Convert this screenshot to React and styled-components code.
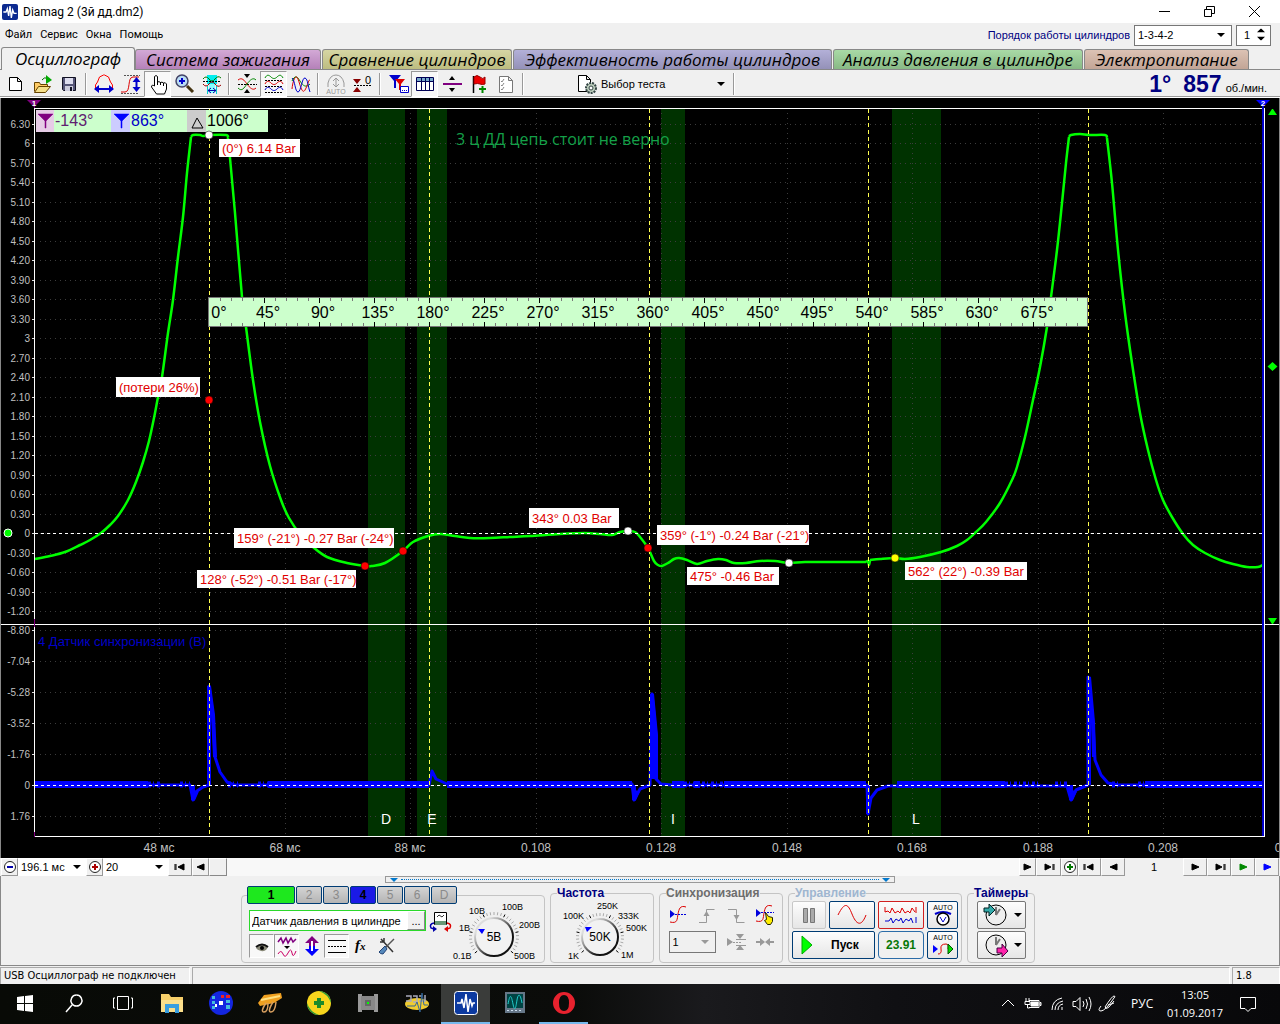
import React, { useState } from 'react';
import styled, { createGlobalStyle, css } from 'styled-components';

const toolGroups = [
  ['new', 'open', 'save'],
  ['period', 'front', 'hand', 'zoom', 'fit'],
  ['center', 'split3', 'overlay'],
  ['auto', 'zero'],
  ['cursors', 'table', 'divide', 'flag', 'checks'],
];
const pressedTools = ['hand', 'split3', 'table'];

const tabs = [
  { name: 'Осциллограф', width: 134, active: true },
  { name: 'Система зажигания', width: 186, from: '#d3a9d6', to: '#b581b9' },
  { name: 'Сравнение цилиндров', width: 190, from: '#d6d6a4', to: '#bdbd80' },
  { name: 'Эффективность работы цилиндров', width: 319, from: '#b3b0d8', to: '#9491b8' },
  { name: 'Анализ давления в цилиндре', width: 250, from: '#a9daa6', to: '#88b985' },
  { name: 'Электропитание', width: 165, from: '#dcc2b4', to: '#c2a596' },
];

/* ---------- chart data ---------- */

const pressure = [
  [[35, 559], [50, 556], [65, 552], [80, 545], [90, 540], [101, 533], [110, 525], [118, 516], [128, 500], [136, 482], [143, 462], [149, 441], [154, 418], [158, 397], [162, 377], [168, 333], [173, 300], [178, 257], [183, 217], [187, 173], [191, 137]],
  [[191, 137], [193, 135], [200, 135], [203, 136], [209, 135], [226, 135], [228, 138]],
  [[228, 138], [230, 158], [235, 213], [242, 297], [246, 327], [253, 380], [260, 422], [270, 466], [281, 500], [289, 518], [300, 534], [313, 547], [327, 557], [347, 563], [365, 566], [372, 566], [385, 563], [403, 551], [413, 542], [428, 536], [440, 534], [455, 536], [470, 538], [490, 538], [510, 537], [530, 536], [560, 534], [585, 533], [600, 534], [612, 535], [620, 532], [628, 531], [635, 532], [640, 537], [648, 548], [654, 561], [658, 565], [662, 566], [668, 563], [674, 559], [679, 558], [687, 560], [697, 564], [707, 561], [718, 559], [726, 560], [734, 563], [746, 563], [760, 561], [775, 561], [789, 563], [805, 562], [830, 562], [866, 562]],
  [[866, 562], [868, 561], [869, 565], [870, 560]],
  [[870, 560], [880, 559], [895, 558], [905, 559], [920, 557], [941, 552], [957, 546], [967, 540], [976, 532], [986, 522], [1000, 503], [1012, 480], [1017, 467], [1025, 437], [1033, 400], [1040, 367], [1047, 327], [1051, 297], [1057, 250], [1062, 203], [1066, 163], [1069, 137]],
  [[1069, 137], [1071, 135], [1080, 134], [1090, 135], [1105, 135], [1107, 138]],
  [[1107, 138], [1112, 183], [1118, 250], [1125, 313], [1132, 363], [1140, 413], [1148, 450], [1156, 480], [1163, 500], [1172, 517], [1183, 534], [1193, 545], [1205, 553], [1220, 560], [1233, 564], [1247, 567], [1258, 567], [1263, 565]],
];

const syncLine = 'M35 785H190L193 800L197 791L203 787L209 785V686L213 716L215 757L220 772L227 782L234 785H429L432 771L436 779L447 784H632L634 800L640 789L650 785L652 694L656 735V779L661 784L672 785H867L868 814L871 798L877 790L888 786H1067L1071 800L1076 790L1088 785V677L1093 722L1095 760L1101 775L1108 783L1118 785H1263';
const syncSpikes = 'M209 785V686L213 715L215 757M652 779V694L656 735V779M868 785V814M1089 785V677L1093 722L1094 757M193 785V800L197 791M634 785V800L638 791M1071 785V800L1075 791';
const syncBands = [[35, 148], [268, 429], [447, 632], [672, 684], [694, 700], [724, 866], [897, 1005], [1145, 1264]];
const syncNoise = [[148, 162], [180, 190], [228, 238], [258, 268], [684, 724], [1005, 1040], [1055, 1068], [1112, 1118], [1138, 1145]];

const bands = [[368, 37, 'D', 386], [417, 30, 'E', 432], [661, 24, 'I', 673], [892, 49, 'L', 916]];
const strokes = [209, 429, 649, 868, 1088];
const upperTicks = Array.from({ length: 26 }, (_, i) => {
  const v = 6.3 - i * 0.3;
  const text = Math.abs(v) < 0.01 ? '0' : Math.abs(v - Math.round(v)) < 0.01 && v > 0 ? String(Math.round(v)) : v.toFixed(2);
  return [text, Math.round(124 + i * 19.48)];
});
const lowerTicks = ['-8.80', '-7.04', '-5.28', '-3.52', '-1.76', '0', '1.76'].map((t, i) => [t, 630 + i * 31]);
const timeTicks = [['48 мс', 159], ['68 мс', 285], ['88 мс', 410], ['0.108', 536], ['0.128', 661], ['0.148', 787], ['0.168', 912], ['0.188', 1038], ['0.208', 1163]];

const notes = [
  ['(0°) 6.14 Bar', 219, 139, 81, 18],
  ['(потери 26%)', 116, 377, 84, 20],
  ['159° (-21°) -0.27 Bar (-24°)', 234, 528, 160, 20],
  ['128° (-52°) -0.51 Bar (-17°)', 197, 570, 159, 18],
  ['343° 0.03 Bar', 529, 508, 90, 20],
  ['359° (-1°) -0.24 Bar (-21°)', 657, 525, 152, 20],
  ['475° -0.46 Bar', 687, 567, 92, 18],
  ['562° (22°) -0.39 Bar', 905, 562, 122, 18],
];
const points = [[209, 135, '#fff'], [209, 400, '#f00'], [365, 566, '#f00'], [403, 551, '#f00'], [628, 531, '#fff'], [648, 548, '#f00'], [789, 563, '#fff'], [895, 558, '#ff0']];

const smooth = (pts) => pts.reduce((d, p, i) => {
  if (i === 0) return `M${p[0]} ${p[1]}`;
  const a = pts[Math.max(i - 2, 0)];
  const b = pts[i - 1];
  const c = pts[Math.min(i + 1, pts.length - 1)];
  return `${d}C${b[0] + (p[0] - a[0]) / 6} ${b[1] + (p[1] - a[1]) / 6} ${p[0] - (c[0] - b[0]) / 6} ${p[1] - (c[1] - b[1]) / 6} ${p[0]} ${p[1]}`;
}, '');

const Chart = () => (
  <ChartSvg viewBox="1 98 1278 760" role="img" aria-label="Осциллограмма давления">
    {bands.map(([x, w]) => <rect key={x} x={x} y="109" width={w} height="727" fill="#003200" />)}
    <g stroke="#3c3c3c" strokeDasharray="1 4" shapeRendering="crispEdges">
      {[...upperTicks, ...lowerTicks].map(([t, y]) => <path key={y} d={`M40 ${y}.5H1262`} />)}
      {timeTicks.map(([t, x]) => <path key={x} d={`M${x}.5 113V835`} />)}
    </g>

    <g fill="#c0c0c0" fontSize="10" textAnchor="end">
      {[...upperTicks, ...lowerTicks].map(([t, y]) => (
        <g key={y}><text x="30" y={y + 4}>{t}</text><path d={`M32 ${y}.5h3`} stroke="#ddd" /></g>
      ))}
    </g>
    <g fill="#c0c0c0" fontSize="12" textAnchor="middle">
      {timeTicks.map(([t, x]) => <text key={x} x={x} y="852">{t}</text>)}
      <text x="1278" y="852">0</text>
    </g>

    <g fill="none" stroke="#0f0" strokeWidth="2.5" strokeLinejoin="round">
      {pressure.map((seg, i) => <path key={i} d={smooth(seg)} />)}
    </g>
    <g fill="none" stroke="#00f">
      <path d={syncLine} strokeWidth="3" strokeLinejoin="round" />
      <path d={syncSpikes} strokeWidth="4" />
      {syncBands.map(([a, b]) => <path key={a} d={`M${a} 784.5H${b}`} strokeWidth="7" />)}
      {syncNoise.map(([a, b]) => <path key={a} d={`M${a} 784.5H${b}`} strokeWidth="6" strokeDasharray="3 2 1 3" />)}
    </g>

    <g shapeRendering="crispEdges" fill="none">
      <path d="M35 533.5H1263M35 785.5H1263" stroke="#fff" strokeDasharray="3 3" />
      {strokes.map((x) => <path key={x} d={`M${x}.5 109V836`} stroke="#ffff50" strokeDasharray="4 3" />)}
      <path d="M34.5 108V836.5H1264.5V108.5H34.5M1 624.5H1279" stroke="#fff" />
      <path d="M34.5 100V108M34.5 619V627M34.5 832V837" stroke="#800080" />
      <path d="M1262.5 105V836" stroke="#00c" strokeWidth="2" />
    </g>
    <path d="M27 100H41L34 107Z" fill="#800080" />
    <path d="M1256 100H1270L1263 107Z" fill="#00f" />
    <g fill="#fff" fontSize="8" fontWeight="bold" textAnchor="middle"><text x="34" y="106">1</text><text x="1263" y="106">2</text></g>
    <path d="M1268 115h9l-4-6h-1zM1272.500 362l5 4.500-5 4.500-5-4.500zM1268 618h9l-4 6h-1z" fill="#0f0" />
    <circle cx="8" cy="533" r="4" fill="#0f0" stroke="#fff" />

    <g fill="#fff" fontSize="14" textAnchor="middle">
      {bands.map(([x, w, t, tx]) => <text key={t} x={tx} y="824">{t}</text>)}
    </g>
    <text x="38" y="646" fontSize="13" fill="#0000c8">4 Датчик синхронизации (В)</text>
    <Remark x="456" y="145">3 ц ДД цепь стоит не верно</Remark>

    <g>
      <rect x="36" y="110" width="232" height="22" fill="#cfc" />
      <rect x="36" y="110" width="18" height="22" fill="#e6cce6" />
      <rect x="111" y="110" width="19" height="22" fill="#ccf" />
      <rect x="187" y="110" width="19" height="22" fill="#ccc" />
      <path d="M38 114H53L46 121V128H45V121Z" fill="#800080" stroke="#800080" strokeWidth="0.5" />
      <path d="M114 114H129L122 121V128H121V121Z" fill="#00f" stroke="#00f" strokeWidth="0.5" />
      <path d="M192 128L197 118L203 128Z" fill="none" stroke="#000" />
      <g fontSize="16"><text x="55" y="126" fill="#602070">-143°</text><text x="131" y="126" fill="#0000c8">863°</text><text x="207" y="126">1006°</text></g>
    </g>

    <g shapeRendering="crispEdges">
      <rect x="208.5" y="297.5" width="879" height="29" fill="#cfc" stroke="#777" />
      {Array.from({ length: 79 }, (_, i) => (
        <path key={i} d={`M${Math.round(220 + i * 10.99)}.5 298v${i % 5 === 4 ? 5 : 3}m0 ${i % 5 === 4 ? 19 : 22}v${i % 5 === 4 ? 5 : 3}`} stroke={i % 5 === 4 ? '#000' : '#777'} />
      ))}
    </g>
    <g fontSize="16" textAnchor="middle">
      {Array.from({ length: 16 }, (_, i) => <text key={i} x={i ? Math.round(213 + i * 54.95) : 219} y="318">{i * 45}°</text>)}
    </g>

    {points.map(([x, y, c]) => <circle key={`${x}-${y}`} cx={x} cy={y} r="4" fill={c} stroke="#000" strokeWidth="0.5" />)}
    {notes.map(([t, x, y, w, h]) => (
      <g key={t}>
        <rect x={x} y={y} width={w} height={h} fill="#fff" />
        <text x={x + 3} y={y + h / 2 + 5} fontSize="13" fill="#e00000">{t}</text>
      </g>
    ))}
  </ChartSvg>
);

/* ---------- icons ---------- */

const icons = {
  new: <path d="M6.500 5.500h8l4 4v9h-12zM14.500 5.500v4h4" fill="#fff" stroke="#000" />,
  open: <g><path d="M4.500 19.500v-9h5l1 2h7v3" fill="#fc6" stroke="#640" /><path d="M4.500 20.500l4-6h12l-5 6z" fill="#f5e08a" stroke="#640" /><path d="M12 8q2-3 5-2" fill="none" stroke="#060" /><path d="M16 3l6 5-6 4z" fill="#0a0" /></g>,
  save: <g><path d="M5.500 5.500h13v13h-12l-1-1z" fill="#557" stroke="#112" /><path d="M8 6h8v6H8z" fill="#dde" /><path d="M8 14h8v5H8z" fill="#ccd" /><path d="M13 15h2v4h-2z" fill="#112" /></g>,
  period: <g fill="none"><path d="M3.500 18v-5l2-3 2-5 4-2h1l4 2 2 5 2 3v5" stroke="#f00" /><path d="M4 17h16" stroke="#00c" strokeWidth="2" /><path d="M2 17l5-4v8zM22 17l-5-4v8z" fill="#00c" /></g>,
  front: <g fill="none"><path d="M2 20h4c6 0 2-15 8-15h6" stroke="#d00" /><path d="M5 3.500h16M2 21.500h18" stroke="#555" strokeDasharray="2 1" /><path d="M17.500 8v9" stroke="#00c" strokeWidth="2" /><path d="M17.500 5l4 5h-8zM17.500 20l4-5h-8z" fill="#00c" /></g>,
  hand: <path d="M8.500 14V4.500q1.500-2 3 0V10q1.500-1 3 .5q1.500-1 3 .5q2-1 3 1V17l-2 5h-8l-5-7q0-3 3-1M11.500 10v3M14.500 10v3M17.500 11v3" fill="#fff" stroke="#000" />,
  zoom: <g><circle cx="9" cy="9" r="6" fill="#b9dcf5" stroke="#446" strokeWidth="1.500" /><path d="M6 9h6M9 6v6" stroke="#00c" strokeWidth="2" /><path d="M14 14l6 6" stroke="#431" strokeWidth="3" /></g>,
  fit: <g fill="none"><path d="M7 3h10v9H7z" fill="#0ee" /><path d="M9 12h6v9H9z" fill="#8ff" /><path d="M3 7q3-4 6 0t6 0 6-1" stroke="#070" /><path d="M3 9.500h18" stroke="#000" strokeDasharray="2 1" /><path d="M3 12q3 4 6 0t6 0 6 1" stroke="#900" /><path d="M7.500 14v8M16.500 14v8" stroke="#0cc" /><path d="M8 18.500h8M11 16l-3 2.500 3 2.500M13 16l3 2.500-3 2.500" stroke="#00a" /></g>,
  center: <g fill="none"><path d="M3 8c4-3 6 0 9 4s6 7 9 4" stroke="#d00" /><path d="M3 16c4 4 6 0 9-4s6-7 9-4" stroke="#080" /><path d="M3 12.500h19" stroke="#000" strokeDasharray="2 1" /><path d="M9 2h6l-3 4zM9 21h6l-3-4z" fill="#000" /></g>,
  split3: <g fill="none"><path d="M3 6c2-4 4-3 6-1s4 2 6 0 4-3 6 1" stroke="#080" /><path d="M3 8.500h18M3 14.500h18M3 20.500h18" stroke="#000" strokeDasharray="2 1" /><path d="M3 12c2-4 4-3 6-1s4 2 6 0 4-3 6 1" stroke="#d00" /><path d="M3 18c2-4 4-3 6-1s4 2 6 0 4-3 6 1" stroke="#00c" /></g>,
  overlay: <g fill="none"><path d="M3 9c3-6 5-5 8 0s6 7 10 3" stroke="#080" /><path d="M3 17c1-10 4-15 6-10s4 16 7 11 3-10 5-10" stroke="#d00" /><path d="M3 6c3 2 3 14 6 14s4-15 7-14 3 9 5 14" stroke="#00c" /></g>,
  auto: <g fill="none" stroke="#999"><path d="M4 15v-4q2-8 8-8t8 8v4M12 6v9M9 9l3-3 3 3M9 12l3 3 3-3" /><text x="12" y="22" fontSize="7" textAnchor="middle" fill="#999" stroke="none">AUTO</text></g>,
  zero: <g><path d="M2 7h8l-4 5zM2 20h8l-4-5z" fill="#800" /><path d="M3 13.500h17" stroke="#000" strokeDasharray="2 1" /><text x="14" y="12" fontSize="11">0</text></g>,
  cursors: <g><path d="M3 3h12l-5 6v7H8V9z" fill="#00c" /><path d="M9 7h10l-4 5v6h-2v-6z" fill="#d00" /><path d="M14.500 14.500h8v6h-8z" fill="#fff" stroke="#00c" /><path d="M16 18.500h5" stroke="#00c" strokeDasharray="1 1" /></g>,
  table: <g><path d="M3.500 5.500h17v13h-17z" fill="#fff" stroke="#005" /><path d="M4 6h16v3H4z" fill="#7ac" /><path d="M4 9.500h16M8.500 6v12M12.500 6v12M16.500 6v12" stroke="#005" /></g>,
  divide: <g><path d="M3 12h19" stroke="#800080" strokeWidth="2" /><path d="M9 8h6l-3-4zM9 16h6l-3 4z" fill="#000" /></g>,
  flag: <g><path d="M6.500 4v17" stroke="#000" strokeWidth="1.500" /><path d="M7 5q3-3 6 0t5 0v7q-3 1-5 0t-6 0z" fill="#e00" stroke="#900" /><path d="M12 17h7M15.500 14v7" stroke="#080" strokeWidth="2" /></g>,
  checks: <g fill="none"><path d="M5.500 4.500h9l4 4v12h-13zM14.500 4.500v4h4" fill="#fff" stroke="#777" /><path d="M7 9l1 1 2-3M7 13l1 1 2-3M7 17l1 1 2-3" stroke="#888" /></g>,
  test: <g><path d="M3.500 3.500h8l4 4v12h-12zM11.500 3.500v4h4" fill="#fff" stroke="#000" /><circle cx="16" cy="16" r="5" fill="#bcb" stroke="#344" strokeWidth="2" strokeDasharray="2 1" /><circle cx="16" cy="16" r="2" fill="#fff" stroke="#344" /></g>,
  eye: <g><path d="M6 14q5-6 12-2-1 6-7 5-4-1-5-3z" fill="#887" /><path d="M6 13q6-5 12 0" stroke="#111" strokeWidth="2" fill="none" /><circle cx="12" cy="14" r="2" /></g>,
  shape: <g fill="none" stroke="#800080"><path d="M3 8l3-4 2 5 3-5 2 5 3-5 2 4 3-3" strokeWidth="1.500" /><path d="M9 12h6l-3 3z" fill="#000" stroke="none" /><path d="M3 20q3-5 5 0t5-1 4 0 4-2" stroke="#c06" /></g>,
  updown: <g><path d="M12 2l7 7h-4v3H9V9H5z" fill="#800080" /><path d="M12 22l7-7h-4v-3H9v3H5z" fill="#00f" /><path d="M11 7h2v10h-2z" fill="#fff" /></g>,
  lines: <path d="M3 6.500h18M3 18.500h18M3 12.500h2M6 12.500h2M9 12.500h2M12 12.500h2M15 12.500h2M18 12.500h3" stroke="#000" />,
  fx: <text x="5" y="16" fontSize="15" fontStyle="italic" fontWeight="bold" fontFamily="Liberation Serif, serif">f<tspan fontSize="11">x</tspan></text>,
  tools: <g><path d="M6 5l12 13M9 4v4H5" stroke="#333" strokeWidth="1.500" fill="none" /><path d="M19 5l-9 9" stroke="#555" strokeWidth="1.500" /><path d="M10 12l2 3-4 5q-3 0-4-2z" fill="#58b" stroke="#247" /></g>,
  probe: <g><path d="M6.500 3.500h12v12h-12z" fill="#fff" stroke="#000" /><path d="M7 12h11v4H7z" fill="#697" /><path d="M9 8l2-2 3 2 2-2" stroke="#333" fill="none" /><path d="M6 14q-5 1-3 5l3 1" fill="none" stroke="#00a" strokeWidth="1.500" /><path d="M19 14q5 1 3 5l-3 1" fill="none" stroke="#d00" strokeWidth="1.500" /><path d="M5 17l4 3-4 3z" fill="#00a" /><path d="M20 17l-4 3 4 3z" fill="#d00" /></g>,
  syncLevel: <g><path d="M4 20c8 2 7-3 8-8s2-9 8-7" stroke="#d00" fill="none" /><path d="M4 8l5 4-5 4z" fill="#00d" /><path d="M9 12.500h11" stroke="#00d" strokeDasharray="2 1" /></g>,
  rise: <g><path d="M4 20.500h7.500V7.500h8" stroke="#999" fill="none" /><path d="M11.500 9l3 5h-6z" fill="#999" /></g>,
  fall: <g><path d="M4 7.500h8.500v13h8" stroke="#999" fill="none" /><path d="M12.500 18l3-5h-6z" fill="#999" /></g>,
  syncHand: <g><path d="M3 19c8 2 7-3 8-8s2-9 8-7" stroke="#d00" fill="none" /><path d="M3 7l5 4-5 4z" fill="#00d" /><path d="M8 10.500h13" stroke="#00d" strokeDasharray="2 1" /><path d="M12.500 10.500l3 4 4 1v4l-2 3h-3l-3-4 2-1z" fill="#fe0" stroke="#220" /></g>,
  window: <g fill="#999"><path d="M3 8l6 4-6 4zM12 4h8l-4 5zM12 20h8l-4-5z" /><path d="M9 12.500h9" stroke="#999" strokeDasharray="2 1" /><path d="M12 9.500h10M12 15.500h10" stroke="#999" /></g>,
  squeeze: <path d="M3 11h4V8l5 4-5 4v-3H3zM21 11h-4V8l-5 4 5 4v-3h4z" fill="#999" />,
};

const Icon = ({ name }) => <IconSvg viewBox="0 0 24 24" aria-hidden="true">{icons[name]}</IconSvg>;
const Caret = () => <CaretSvg viewBox="0 0 8 4" aria-hidden="true"><path d="M0 0h8L4 4z" /></CaretSvg>;

const navShapes = {
  first: 'M6 5v6M7 5v6M15 5v6l-6-3z',
  prev: 'M15 5v6l-7-3z',
  next: 'M8 5v6l7-3z',
  last: 'M8 5v6l6-3zM16 5v6M17 5v6',
};
const NavIcon = ({ shape, color = '#000' }) => (
  <NavSvg viewBox="0 0 23 16" aria-hidden="true"><path d={navShapes[shape]} fill={color} stroke={color} /></NavSvg>
);
const RoundSign = ({ plus, color }) => (
  <SignSvg viewBox="0 0 16 16" aria-hidden="true">
    <circle cx="8" cy="8" r="5.5" fill="#fff" stroke="#222" />
    <path d={plus ? 'M5 8h6M8 5v6' : 'M5 8h6'} stroke={color} strokeWidth="2" />
  </SignSvg>
);

const Dial = ({ width, cx, r, value, labels, label, pointer }) => (
  <DialBox $width={width}>
    <svg viewBox={`0 0 ${width} 66`} width={width} height="66" aria-hidden="true">
      <defs>
        <linearGradient id={`rim${width}`} x1="0" y1="0" x2="1" y2="1">
          <stop offset="0.2" stopColor="#ddd" /><stop offset="0.7" stopColor="#111" />
        </linearGradient>
      </defs>
      {Array.from({ length: 31 }, (_, i) => {
        const a = ((140 + i * (260 / 30)) * Math.PI) / 180;
        return <line key={i} x1={cx + Math.cos(a) * (r + 2)} y1={37 + Math.sin(a) * (r + 2)} x2={cx + Math.cos(a) * (r + 5)} y2={37 + Math.sin(a) * (r + 5)} stroke={i % 6 ? '#aaa' : '#000'} />;
      })}
      <circle cx={cx} cy="37" r={r - 1} fill="#f2f2f2" stroke={`url(#rim${width})`} strokeWidth="2" />
      <path d={pointer} fill="#00f" />
      <text x={cx} y="41" fontSize="12" textAnchor="middle">{value}</text>
      <g fontSize="9">{labels.map(([t, x, y]) => <text key={t} x={x} y={y}>{t}</text>)}</g>
    </svg>
    <DialInput type="range" aria-label={label} />
  </DialBox>
);

const Clock = ({ out }) => (
  <svg width="28" height="26" viewBox="0 0 28 26" aria-hidden="true">
    <circle cx="15" cy="13" r="10" fill="#eee" stroke="#000" />
    <path d="M15 13V5M15 13l4-6" stroke="#777" strokeWidth="2" />
    {out
      ? <path d="M16 16h5v-4l6 7-6 6v-4h-5z" fill="#f2a" stroke="#404" />
      : <path d="M3 6h5V2l6 6-6 6v-4H3z" fill="#3aa" stroke="#022" />}
  </svg>
);

const taskIcons = [
  ['Пуск', <path key="i" d="M4 6l7-1v7H4zM12 5l8-1v8h-8zM4 13h7v7l-7-1zM12 13h8v8l-8-1z" fill="#fff" />],
  ['Поиск', <path key="i" d="M10 14l-6 7M14.500 4a5.500 5.500 0 1 1-.1 0" stroke="#fff" strokeWidth="1.500" fill="none" />],
  ['Представление задач', <path key="i" d="M6.500 5.500h11v13h-11zM4 7H2.500v10H4M20 7h1.500v10H20" stroke="#fff" fill="none" />],
  ['Проводник', <g key="i"><path d="M1 3h8l2 3h12v15H1z" fill="#f6cf6a" /><path d="M1 9h22v12H1z" fill="#fce08c" /><path d="M5 13h14v9h-4v-5H9v5H5z" fill="#3a9fe0" /></g>],
  ['Diagnostics', <g key="i"><circle cx="12" cy="12" r="12" fill="#1426e0" /><path d="M3 5h3v3H3zM3 10h3v3H3zM3 15h3v3H3zM17 9h4v3h-4zM17 14h4v4h-4z" fill="#4bd" /><path d="M12 4h3v3h-3zM17 4h4v3h-4z" fill="#e22" /><path d="M10 10h4v4h-4zM6 13h2v3H6z" fill="#fff" /></g>],
  ['Scan', <g key="i"><path d="M0 12L6 4l17-2 1 5-8 5-14 3z" fill="#f0a020" /><path d="M3 9l19-4" stroke="#ffe080" strokeWidth="2" /><path d="M8 12q-6 9-2 9t4-9M15 11q-6 10-2 10t5-10" fill="none" stroke="#d9a060" strokeWidth="1.500" /></g>],
  ['360', <g key="i"><circle cx="12" cy="12" r="12" fill="#f7d51d" /><path d="M12 0a12 12 0 0 1 12 12q-3-9-12-12zM12 24A12 12 0 0 1 0 12q3 9 12 12z" fill="#2a9a3a" /><path d="M7 12h10M12 7v10" stroke="#1b8a2b" strokeWidth="4" /></g>],
  ['Adapter', <g key="i"><path d="M2 3h4v18H2zM18 3h4v18h-4z" fill="#999" /><path d="M5 5h14v14H5z" fill="#888" /><path d="M9 9h6v6H9z" fill="#666" /><path d="M11 11h2v2h-2z" fill="#0f0" /></g>],
  ['Disco', <g key="i"><ellipse cx="12" cy="13" rx="12" ry="6" fill="#f0cc30" /><path d="M1 5h5v5H1M8 5h4v6H8M14 5h3M14 10h4M20 4v7" stroke="#aab" strokeWidth="1.500" fill="none" /><path d="M2 15h8l2-4 3 10 2-19 2 12h4" stroke="#369" fill="none" /></g>],
  ['Diamag 2', <g key="i"><rect x="0.500" y="0.500" width="23" height="23" rx="3" fill="#0c3aa0" stroke="#fff" /><path d="M3 12h4l1-4 2 9 2-14 2 18 2-13 2 7 1-3h2" stroke="#fff" strokeWidth="1.500" fill="none" /></g>],
  ['Oscilloscope', <g key="i"><path d="M2 1h20v21H2z" fill="#678" /><path d="M4 3h16v14H4z" fill="#044" /><path d="M5 13c2-10 3-10 5 0s3 2 4-4 3-8 5 3" stroke="#2cc" fill="none" /><path d="M4 19.500h16" stroke="#cde" strokeDasharray="2 2" /></g>],
  ['Opera', <path key="i" fillRule="evenodd" d="M12 1a11 11 0 1 1 0 22 11 11 0 1 1 0-22zM12 4q-5 0-5 8t5 8 5-8-5-8z" fill="#e8222e" />],
];

const Logo = () => (
  <svg width="16" height="16" viewBox="0 0 24 24" aria-hidden="true">
    <rect width="24" height="24" rx="3" fill="#0c2a90" />
    <path d="M2 12h4l2-5 2 11 2-15 2 18 2-12 2 5h4" stroke="#fff" strokeWidth="2" fill="none" />
  </svg>
);

/* ---------- page ---------- */

export default () => {
  const [order, setOrder] = useState('1-3-4-2');

  return (
    <Window>
      <GlobalStyle />
      <TitleBar>
        <Logo />
        <Title>Diamag 2 (3й дд.dm2)</Title>
        <WindowButton aria-label="Свернуть"><svg width="11" height="11"><path d="M0 5.500h11" stroke="#000" /></svg></WindowButton>
        <WindowButton aria-label="Восстановить"><svg width="11" height="11"><path d="M.5 3.500h7v7h-7zM2.500 3V.5h8v7H8" fill="none" stroke="#000" /></svg></WindowButton>
        <WindowButton aria-label="Закрыть"><svg width="11" height="11"><path d="M0 0l11 11M11 0L0 11" stroke="#000" /></svg></WindowButton>
      </TitleBar>

      <MenuBar>
        {['Файл', 'Сервис', 'Окна', 'Помощь'].map((m) => <MenuButton key={m}>{m}</MenuButton>)}
        <OrderLabel htmlFor="order">Порядок работы цилиндров</OrderLabel>
        <SelectBox $width={98} $height={21}>
          <select id="order" value={order} onChange={(e) => setOrder(e.target.value)}>
            <option>1-3-4-2</option>
            <option>1-2-4-3</option>
          </select>
          <Caret />
        </SelectBox>
        <Spinner>
          <input aria-label="Номер цилиндра" defaultValue="1" />
          <svg width="9" height="14" viewBox="0 0 9 14" aria-hidden="true"><path d="M0 4h9L5 0H4zM0 9h9l-4 4H4z" /></svg>
        </Spinner>
      </MenuBar>

      <Tabs>
        {tabs.map((t) => (
          <Tab key={t.name} $width={t.width} $active={t.active} $from={t.from} $to={t.to}>{t.name}</Tab>
        ))}
      </Tabs>

      <Toolbar>
        {toolGroups.map((group) => (
          <React.Fragment key={group[0]}>
            {group.map((name) => (
              <ToolButton key={name} aria-label={name} $pressed={pressedTools.includes(name)}><Icon name={name} /></ToolButton>
            ))}
            <Separator />
          </React.Fragment>
        ))}
        <TestButton><Icon name="test" /><span>Выбор теста</span><Caret /></TestButton>
        <Separator />
        <Readout><b>1°</b><b>857</b><span>об./мин.</span></Readout>
      </Toolbar>

      <Chart />

      <NavRow>
        <NavButton $width={17} aria-label="Уменьшить"><RoundSign color="#00a" /></NavButton>
        <SelectBox $width={68} $height={18} $plain>
          <select aria-label="Длительность"><option>196.1 мс</option></select><Caret />
        </SelectBox>
        <NavButton $width={17} aria-label="Увеличить"><RoundSign plus color="#a00" /></NavButton>
        <SelectBox $width={65} $height={18} $plain>
          <select aria-label="Шаг"><option>20</option></select><Caret />
        </SelectBox>
        <NavButton $width={24} aria-label="В начало"><NavIcon shape="first" /></NavButton>
        <NavButton $width={17} aria-label="Влево"><NavIcon shape="prev" /></NavButton>
        <Track><Thumb aria-label="Прокрутка" /></Track>
        <NavButton $width={17} aria-label="Вправо"><NavIcon shape="next" /></NavButton>
        <NavButton $width={25} aria-label="В конец"><NavIcon shape="last" /></NavButton>
        <NavButton $width={17} aria-label="Добавить"><RoundSign plus color="#070" /></NavButton>
        <NavButton $width={23} aria-label="Первый кадр"><NavIcon shape="first" /></NavButton>
        <NavButton $width={24} aria-label="Предыдущий кадр"><NavIcon shape="prev" /></NavButton>
        <Frame>1</Frame>
        <NavButton $width={24} aria-label="Следующий кадр"><NavIcon shape="next" /></NavButton>
        <NavButton $width={24} aria-label="Последний кадр"><NavIcon shape="last" /></NavButton>
        <NavButton $width={24} aria-label="Воспроизвести"><NavIcon shape="next" color="#080" /></NavButton>
        <NavButton $width={24} aria-label="Воспроизвести все"><NavIcon shape="next" color="#00f" /></NavButton>
      </NavRow>

      <Panel>
        <Splitter aria-label="Свернуть панель">
          <CaretSvg viewBox="0 0 8 4"><path d="M0 0h8L4 4z" /></CaretSvg><i /><CaretSvg viewBox="0 0 8 4"><path d="M0 0h8L4 4z" /></CaretSvg>
        </Splitter>
        <Groups>
          <Group $width={304}>
            <Channels>
              {['1', '2', '3', '4', '5', '6', 'D'].map((c) => <Channel key={c} $name={c}>{c}</Channel>)}
            </Channels>
            <ChannelBody>
              <ChannelLeft>
                <Row>
                  <SensorField>
                    <input aria-label="Датчик" defaultValue="Датчик давления в цилиндре" />
                    <button aria-label="Выбрать датчик">...</button>
                  </SensorField>
                  <ToolButton aria-label="Щуп"><Icon name="probe" /></ToolButton>
                </Row>
                <Row>
                  {['eye', 'shape', 'updown', 'lines', 'fx', 'tools'].map((n) => (
                    <ToolButton key={n} aria-label={n} $small $pressed={['eye', 'shape', 'lines'].includes(n)}><Icon name={n} /></ToolButton>
                  ))}
                </Row>
              </ChannelLeft>
              <Dial
                width={90} cx={42} r={20} value="5В" label="Диапазон" pointer="M26 29h7l-3 5z"
                labels={[['10В', 17, 14], ['100В', 50, 10], ['1В', 7, 31], ['200В', 67, 28], ['0.1В', 1, 59], ['500В', 62, 59]]}
              />
            </ChannelBody>
          </Group>

          <Group $width={104}>
            <Legend>Частота</Legend>
            <Dial
              width={96} cx={46} r={19} value="50K" label="Частота" pointer="M31 27h7l-5 5z"
              labels={[['250K', 43, 9], ['100K', 9, 19], ['333K', 64, 19], ['500K', 72, 31], ['1K', 14, 59], ['1M', 67, 58]]}
            />
          </Group>

          <Group $width={124}>
            <Legend $color="#6d6d6d">Синхронизация</Legend>
            <SyncGrid>
              {['syncLevel', 'rise', 'fall', 'syncHand'].map((n) => (
                <ToolButton key={n} aria-label={n}><Icon name={n} /></ToolButton>
              ))}
              <SelectBox $width={47} $height={22} $disabled>
                <select aria-label="Канал синхронизации"><option>1</option></select><Caret />
              </SelectBox>
              <ToolButton aria-label="window"><Icon name="window" /></ToolButton>
              <ToolButton aria-label="squeeze"><Icon name="squeeze" /></ToolButton>
            </SyncGrid>
          </Group>

          <Group $width={174}>
            <Legend $color="#9fb6d0">Управление</Legend>
            <ControlGrid>
              <PushButton $border="#c8c8c8" aria-label="Пауза"><svg width="14" height="16"><path d="M1.500 1.500h4v14h-4zM8.500 1.500h4v14h-4z" fill="#aaa" stroke="#777" /></svg></PushButton>
              <PushButton aria-label="Сигнал"><svg width="30" height="20"><path d="M1 10C8-4 11-1 15 9s9 14 14 1" fill="none" stroke="#d00" /></svg></PushButton>
              <PushButton $border="#d02020" aria-label="Самописец">
                <svg width="34" height="20" fill="none"><path d="M1 2v5l3-1 2 2 2-5 3 5 3-2 2 2 2-5 3 5 3-2 2 2 2-5 3 4M32 2v6" stroke="#d00" /><path d="M1 16h4l2-3 2 5 3-4 3 2 2-3 2 5 3-4 3 2 2-3 2 5M32 12v6" stroke="#00c" /></svg>
              </PushButton>
              <PushButton aria-label="Авто диапазон">
                <svg width="26" height="24"><text x="13" y="7" fontSize="7" textAnchor="middle">AUTO</text><path d="M5 11q8-4 16 0" stroke="#00c" fill="none" strokeWidth="2" /><circle cx="13" cy="16" r="6" fill="#fff" stroke="#000" strokeWidth="1.500" /><path d="M10 14l3 5 3-5" stroke="#00c" fill="none" /></svg>
              </PushButton>
              <StartButton><svg width="12" height="20"><path d="M1 1l10 9-10 9z" fill="#0f0" stroke="#0a0" /></svg><span>Пуск</span></StartButton>
              <Speed>23.91</Speed>
              <PushButton aria-label="Авто синхронизация">
                <svg width="26" height="24"><text x="13" y="7" fontSize="7" textAnchor="middle">AUTO</text><path d="M8 21q4 0 3-5t5-5q3 0 2 5" stroke="#d00" fill="none" /><path d="M3 12l5 4-5 4z" fill="#00f" /><path d="M18 11l5 5-5 5z" fill="#0d0" stroke="#050" /></svg>
              </PushButton>
            </ControlGrid>
          </Group>

          <Group $width={68}>
            <Legend>Таймеры</Legend>
            <TimerColumn>
              <PushButton $border="#777" aria-label="Таймер включения"><Clock /><Caret /></PushButton>
              <PushButton $border="#777" aria-label="Таймер выключения"><Clock out /><Caret /></PushButton>
            </TimerColumn>
          </Group>
        </Groups>
      </Panel>

      <StatusBar>
        <span>USB Осциллограф не подключен</span>
        <span />
        <span>1.8</span>
      </StatusBar>

      <Taskbar>
        {taskIcons.map(([name, icon]) => (
          <TaskButton key={name} aria-label={name} $active={name === 'Diamag 2'} $running={name === 'Opera'}>
            <svg width="24" height="24" viewBox="0 0 24 24">{icon}</svg>
          </TaskButton>
        ))}
        <Tray>
          <svg width="126" height="24" viewBox="0 0 126 24" fill="none" stroke="#fff" aria-label="Системные значки">
            <path d="M4 14l6-6 6 6" />
            <path d="M31 8.500h10v7H31M42 10.500h1v3h-1zM28 6v3M31 6v3M27 9.500h5v3h-5zM29.500 13v3h2" /><path d="M33 10h7v4h-7z" fill="#fff" />
            <path d="M54 18q0-10 10-12M57 18q0-7 8-9M60 18q0-5 5-6M64 18v-3" />
            <path d="M75 9.500h3l4-4v13l-4-4h-3zM85 9q2 3 0 6M88 7q3 5 0 10M91 5q4 7 0 14" />
            <path d="M103 14q-4 5 0 5t13-13q2-2 0-2t-9 11q1 3 4 0l5-6M110 13q4-1 6-2" />
          </svg>
          <Language>РУС</Language>
          <ClockText>13:05<br />01.09.2017</ClockText>
          <TrayButton aria-label="Центр уведомлений"><svg width="18" height="18" fill="none" stroke="#fff"><path d="M1.500 2.500h15v11H12l-3 3-3-3H1.500z" /></svg></TrayButton>
        </Tray>
      </Taskbar>
    </Window>
  );
};

/* ---------- styles ---------- */

const ui = '"Liberation Sans", Arial, sans-serif';
const segoe = '"Open Sans", "Noto Sans", sans-serif';
const caption = 'Roboto, "Open Sans", sans-serif';
const tahoma = '"DejaVu Sans Condensed", "Noto Sans", sans-serif';

const GlobalStyle = createGlobalStyle`
  * { box-sizing: border-box; }
  body { margin: 0; background: #000; }
  button, input, select { font: inherit; color: inherit; margin: 0; }
  button { padding: 0; border: none; background: none; }
`;

const Window = styled.div`
  display: flex;
  flex-direction: column;
  min-height: 100vh;
  font: 11px/14px ${ui};
  color: #000;
  background: #f0f0f0;
`;

const TitleBar = styled.header`
  display: flex;
  align-items: center;
  height: 23px;
  padding: 0 3px 0 2px;
  background: #fff;
`;

const Title = styled.h1`
  flex: 1;
  margin: 0 0 0 5px;
  font: 12px/16px ${caption};
`;

const WindowButton = styled.button`
  display: flex;
  align-items: center;
  justify-content: center;
  width: 45px;
  height: 23px;
`;

const MenuBar = styled.nav`
  display: flex;
  align-items: center;
  height: 24px;
  padding: 0 9px 0 1px;
  gap: 4px;
`;

const MenuButton = styled.button`
  padding: 0 0 0 4px;
  font: 11px/16px ${caption};
`;

const OrderLabel = styled.label`
  margin-left: auto;
  color: #000080;
`;

const CaretSvg = styled.svg`
  width: 8px;
  height: 4px;
  flex: none;
`;

const SelectBox = styled.div`
  position: relative;
  width: ${(p) => p.$width}px;
  height: ${(p) => p.$height}px;
  border: ${(p) => (p.$plain ? 'none' : '1px solid #777')};
  background: ${(p) => (p.$disabled ? '#f0f0f0' : '#fff')};

  select {
    width: 100%;
    height: 100%;
    padding: 0 3px;
    border: none;
    background: transparent;
    appearance: none;
  }

  ${CaretSvg} {
    position: absolute;
    right: ${(p) => (p.$plain ? 5 : 6)}px;
    top: calc(50% - 2px);
    pointer-events: none;
    fill: ${(p) => (p.$disabled ? '#999' : '#000')};
  }
`;

const Spinner = styled.div`
  display: flex;
  align-items: center;
  width: 35px;
  height: 21px;
  padding: 0 5px;
  border: 1px solid #777;
  background: #fff;

  input {
    width: 15px;
    padding: 0 2px;
    border: none;
    background: none;
  }
`;

const Tabs = styled.div`
  display: flex;
  align-items: flex-end;
  height: 22px;
  padding-left: 1px;
`;

const Tab = styled.button`
  flex: 0 1 ${(p) => p.$width}px;
  height: 20px;
  margin-right: 1px;
  border: 1px solid #888;
  border-bottom: none;
  border-radius: 3px 3px 0 0;
  background: linear-gradient(${(p) => p.$from}, ${(p) => p.$to});
  font: italic 17px/18px ${segoe};
  white-space: nowrap;

  ${(p) => p.$active && css`
    height: 23px;
    margin: 0 0 -1px;
    background: #f0f0f0;
    z-index: 1;
  `}
`;

const Toolbar = styled.div`
  display: flex;
  align-items: center;
  height: 29px;
  padding-left: 1px;
  border-top: 1px solid #888;
  border-bottom: 1px solid #fff;
  box-shadow: inset 0 -1px #999;
`;

const ToolButton = styled.button`
  display: flex;
  align-items: center;
  justify-content: center;
  flex: none;
  width: ${(p) => (p.$small ? 25 : 27)}px;
  height: ${(p) => (p.$small ? 24 : 26)}px;

  ${(p) => p.$pressed && css`
    background: #f8f8f8;
    border: 1px solid #fff;
    border-top-color: #999;
    border-left-color: #999;
  `}
`;

const Separator = styled.span`
  flex: none;
  width: 8px;
  height: 22px;
  background: linear-gradient(90deg, transparent 3px, #999 3px, #999 4px, #fff 4px, #fff 5px, transparent 5px);
`;

const IconSvg = styled.svg`
  width: 24px;
  height: 24px;
  flex: none;
`;

const TestButton = styled.button`
  display: flex;
  align-items: center;
  width: 203px;
  height: 26px;
  padding: 0 5px 0 48px;
  gap: 2px;

  span {
    flex: 1;
    text-align: left;
  }
`;

const Readout = styled.div`
  display: flex;
  align-items: baseline;
  margin-left: auto;
  padding-right: 13px;

  b {
    margin-right: 12px;
    color: #000080;
    font-size: 23px;
    line-height: 26px;
  }

  b + b {
    margin-right: 4px;
  }
`;

const ChartSvg = styled.svg`
  display: block;
  width: 100%;
  border: solid #888;
  border-width: 0 1px;
  background: #000;
  font-family: ${ui};
`;

const Remark = styled.text`
  font: 16px ${segoe};
  fill: #14a048;
`;

const NavRow = styled.div`
  display: flex;
  height: 18px;
  padding: 0 1px;
`;

const NavButton = styled.button`
  display: flex;
  align-items: center;
  justify-content: center;
  flex: none;
  width: ${(p) => p.$width}px;
  overflow: hidden;
  border: 1px solid #999;
  border-top-color: #fff;
  border-left-color: #fff;
  background: #f0f0f0;
`;

const NavSvg = styled.svg`
  width: 23px;
  height: 16px;
  flex: none;
`;

const SignSvg = styled.svg`
  width: 16px;
  height: 16px;
  flex: none;
`;

const Track = styled.div`
  flex: 1;
  background: #f8f8f8;
`;

const Thumb = styled.button`
  display: block;
  width: 18px;
  height: 18px;
  border: 1px solid #888;
  border-top-color: #fff;
  border-left-color: #fff;
  background: #f0f0f0;
`;

const Frame = styled.span`
  width: 58px;
  line-height: 18px;
  text-align: center;
`;

const Panel = styled.main`
  border: solid #888;
  border-width: 0 1px 1px;
  padding-bottom: 2px;
`;

const Splitter = styled.button`
  display: flex;
  align-items: center;
  width: 510px;
  height: 7px;
  margin: 0 auto;
  padding: 0 4px;
  gap: 3px;
  border: 1px solid #999;
  fill: #07c;

  i {
    flex: 1;
    border-top: 1px dotted #07c;
  }
`;

const Groups = styled.div`
  display: flex;
  justify-content: center;
  gap: 5px;
  padding: 3px 4px 0 0;
`;

const Group = styled.fieldset`
  flex: none;
  width: ${(p) => p.$width}px;
  min-width: 0;
  height: 77px;
  margin: 0;
  padding: 0 3px;
  border: 1px solid #c4c4c4;
  border-radius: 4px;
`;

const Legend = styled.legend`
  margin-left: 3px;
  padding: 0;
  color: ${(p) => p.$color || '#000080'};
  font-weight: bold;
  font-size: 12px;
  line-height: 14px;
`;

const Channels = styled.legend`
  display: flex;
  gap: 1px;
  margin-left: 2px;
  padding: 0;
`;

const channelColors = { 1: '#1ee81e', 4: '#1a1ae6' };

const Channel = styled.button`
  width: ${(p) => (p.$name === '1' ? 48 : 26)}px;
  height: 18px;
  border: 1px solid #003c74;
  border-radius: 2px;
  background: ${(p) => channelColors[p.$name] || 'linear-gradient(#d4d4d4, #b4b4b4)'};
  color: ${(p) => (channelColors[p.$name] ? '#000' : '#8a8a8a')};
  font-weight: ${(p) => (channelColors[p.$name] ? 'bold' : 'normal')};
  font-size: 12px;
`;

const ChannelBody = styled.div`
  display: flex;
  height: 58px;
  align-items: flex-end;
`;

const ChannelLeft = styled.div`
  width: 207px;
  padding: 0 0 4px 4px;
`;

const Row = styled.div`
  display: flex;
  align-items: center;
  height: 25px;
`;

const SensorField = styled.div`
  display: flex;
  flex: none;
  width: 177px;
  height: 21px;
  border: 1px solid #2bd92b;
  background: #fff;

  input {
    flex: 1;
    min-width: 0;
    padding: 0 2px;
    border: none;
    background: none;
  }

  button {
    width: 18px;
    border: 1px solid #888;
    border-top-color: #fff;
    border-left-color: #fff;
    background: #f0f0f0;
    line-height: 8px;
  }
`;

const DialBox = styled.div`
  position: relative;
  flex: none;
  width: ${(p) => p.$width}px;
  height: 62px;

  svg {
    display: block;
    overflow: visible;
  }
`;

const DialInput = styled.input`
  position: absolute;
  inset: 0;
  width: 100%;
  opacity: 0;
`;

const SyncGrid = styled.div`
  display: grid;
  grid-template-columns: repeat(4, 1fr);
  grid-template-rows: 28px 28px;
  align-items: center;
  justify-items: center;

  ${SelectBox} {
    grid-column: span 2;
  }
`;

const ControlGrid = styled.div`
  display: grid;
  grid-template-columns: 34px 46px 46px 31px;
  grid-template-rows: 28px 28px;
  gap: 2px 3px;
  padding-top: 1px;
`;

const PushButton = styled.button`
  display: flex;
  align-items: center;
  justify-content: center;
  border: 1px solid ${(p) => p.$border || '#003c74'};
  border-radius: 2px;
  background: linear-gradient(#fdfdfd, #e6e6e6);
`;

const StartButton = styled(PushButton)`
  grid-column: span 2;
  justify-content: flex-start;
  gap: 18px;
  padding-left: 8px;
  font-weight: bold;
  font-size: 12px;
`;

const Speed = styled.output`
  border: 1px solid #2b6ca8;
  border-radius: 4px;
  color: #087808;
  font-weight: bold;
  font-size: 12px;
  line-height: 26px;
  text-align: center;
`;

const TimerColumn = styled.div`
  display: grid;
  grid-template-rows: 28px 28px;
  gap: 2px;
  width: 49px;
  margin: 0 auto;
  padding-top: 1px;

  ${PushButton} {
    gap: 5px;
  }
`;

const StatusBar = styled.footer`
  display: grid;
  grid-template-columns: 190px 1fr 48px;
  gap: 2px;
  height: 18px;
  margin-top: auto;
  padding-top: 1px;
  font: 11px/16px ${tahoma};

  span {
    padding-left: 3px;
    border: 1px solid #aaa;
    border-right-color: #fff;
    border-bottom-color: #fff;
    white-space: nowrap;
  }
`;

const Taskbar = styled.div`
  display: flex;
  height: 40px;
  background: linear-gradient(90deg, #080a06, #0b0c0a 45%, #1a1a1d 55%, #101013 70%, #08080a);
  color: #fff;
`;

const TaskButton = styled.button`
  display: flex;
  align-items: center;
  justify-content: center;
  width: 49px;
  border-bottom: 2px solid ${(p) => (p.$active || p.$running ? '#76b9ed' : 'transparent')};
  background: ${(p) => (p.$active ? '#3a3c3a' : 'none')};
`;

const Tray = styled.div`
  display: flex;
  align-items: center;
  margin-left: auto;
  font: 12px/18px ${segoe};
`;

const Language = styled.span`
  width: 38px;
  padding-left: 7px;
`;

const ClockText = styled.time`
  width: 66px;
  font-size: 11px;
  text-align: center;
`;

const TrayButton = styled.button`
  width: 52px;
  height: 18px;
  padding-right: 13px;
`;
